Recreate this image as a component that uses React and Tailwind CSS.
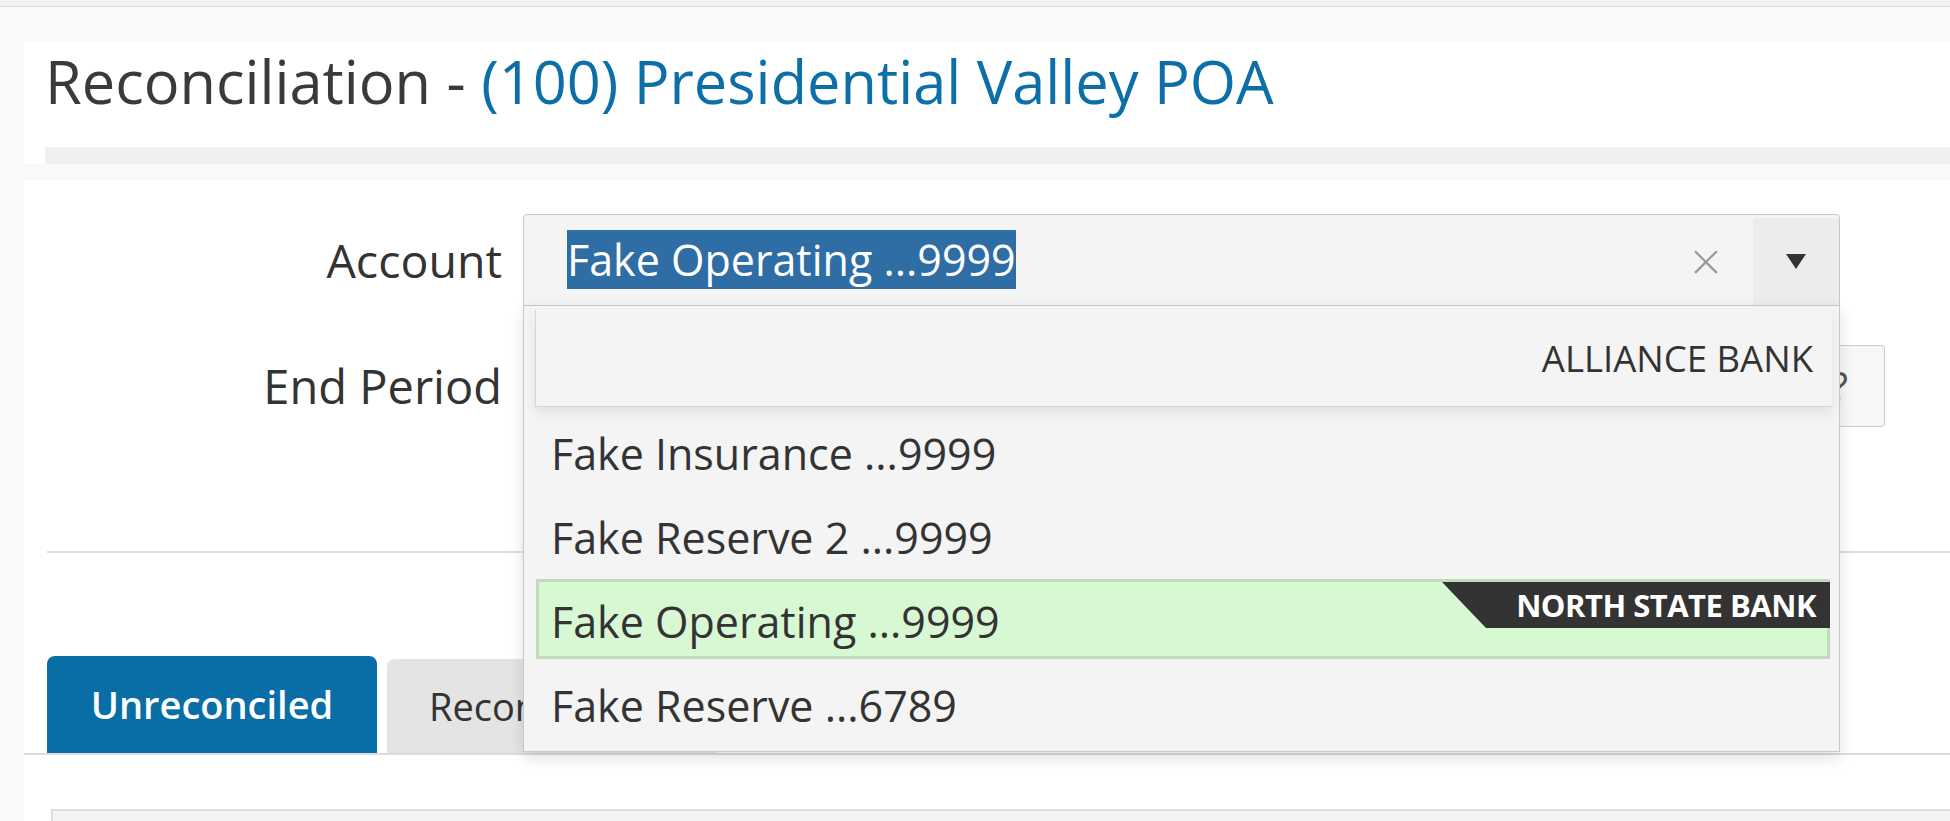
const options = [
  { label: "Fake Insurance ...9999" },
  { label: "Fake Reserve 2 ...9999" },
  { label: "Fake Operating ...9999", active: true, bank: "NORTH STATE BANK" },
  { label: "Fake Reserve ...6789" },
];

export default function App() {
  return (
    <div className="h-[821px] overflow-hidden bg-[#f8f9fa] font-['Open_Sans',sans-serif] text-[#333]">
      <div className="h-[7px] border-b border-[#dedede] bg-[#f2f2f2]" />

      {/* page header */}
      <div className="ml-[24px] mt-[35px] bg-white pt-[9px]">
        <h1 className="pl-[21px] text-[59.5px] leading-[60px] font-normal text-[#3a3a3a]">
          Reconciliation - <span className="text-[#0d6fa8]">(100) Presidential Valley POA</span>
        </h1>
        <div className="ml-[21px] mt-[36px] h-[17px] bg-[#f0f0f0]" />
      </div>

      {/* main card */}
      <div className="ml-[24px] mt-[16px] h-[700px] bg-white pt-[34px]">
        <div className="flex items-center">
          <label className="w-[478px] text-right text-[46.5px] leading-[92px]">Account</label>
          <div className="relative ml-[21px] w-[1317px]">
            <div className="flex h-[92px] items-center rounded-t-[4px] border border-[#c8c8c8] bg-[#f4f4f4]">
              <div className="flex-1 pl-[43px]">
                <span className="bg-[#2f6ea5] text-[43px] leading-[56px] text-white">Fake Operating ...9999</span>
              </div>
              <span className="mr-[27px] w-[40px] text-center text-[54px] font-light leading-none text-[#9a9a9a]">×</span>
              <div className="mt-[3px] flex w-[86px] items-center justify-center self-stretch bg-[#ececec]">
                <svg width="20" height="15" viewBox="0 0 20 15">
                  <path d="M0 0h20L10 15z" fill="#333" />
                </svg>
              </div>
            </div>

            {/* open dropdown */}
            <div className="absolute left-0 top-full z-10 h-[446px] w-full border border-t-0 border-[#c8c8c8] bg-[#f4f4f4] shadow-[0_6px_14px_rgba(0,0,0,0.12)]">
              <div className="ml-[11px] mr-[7px] mt-[4px] h-[97px] border-b border-l border-[#d6d6d6] pr-[19px] text-right text-[36.5px] leading-[97px] shadow-[0_6px_10px_rgba(0,0,0,0.07)]">
                ALLIANCE BANK
              </div>
              <div className="ml-[12px] mr-[9px] mt-[4px] flex flex-col gap-[4px]">
                {options.map((o) =>
                  o.active ? (
                    <div
                      key={o.label}
                      className="relative flex h-[80px] items-center border-[3px] border-[#c2dcbb] bg-[#d8f7d3] pl-[12px] pt-[6px] text-[43px]"
                    >
                      {o.label}
                      <span className="absolute right-[-3px] top-0 flex h-[46px] w-[388px] items-center justify-end bg-[#333] pr-[14px] text-[31px] font-bold tracking-[-0.5px] text-white [clip-path:polygon(0_0,100%_0,100%_100%,44px_100%)]">
                        {o.bank}
                      </span>
                    </div>
                  ) : (
                    <div key={o.label} className="flex h-[80px] items-center pl-[15px] pt-[6px] text-[43px]">
                      {o.label}
                    </div>
                  )
                )}
              </div>
            </div>
          </div>
        </div>

        <div className="mt-[39px] flex items-center">
          <label className="w-[478px] text-right text-[47px] leading-[82px]">End Period</label>
          <div className="ml-[21px] flex">
            <div className="h-[82px] w-[1272px] rounded-l-[4px] border border-[#ccc] bg-white" />
            <button className="flex h-[82px] w-[90px] items-center justify-center rounded-r-[4px] border border-l-0 border-[#ccc] bg-[#f7f7f7] text-[40px] text-[#555]">
              ?
            </button>
          </div>
        </div>

        <div className="ml-[23px] mt-[124px] h-[2px] bg-[#e0e0e0]" />

        <div className="mt-[103px] border-b-2 border-[#dcdcdc]">
          <div className="ml-[23px] flex items-end gap-[10px]">
            <div className="flex h-[97px] w-[330px] items-center justify-center rounded-t-[8px] bg-[#0a6ea6] text-[38px] font-semibold text-white">
              Unreconciled
            </div>
            <div className="flex h-[94px] w-[330px] items-center rounded-t-[8px] bg-[#e4e4e4] pl-[42px] text-[38px]">
              Reconciled
            </div>
          </div>
        </div>

        <div className="ml-[27px] mt-[54px] h-[40px] border-l-2 border-t-2 border-[#dedede] bg-[#f4f4f4]" />
      </div>
    </div>
  );
}
